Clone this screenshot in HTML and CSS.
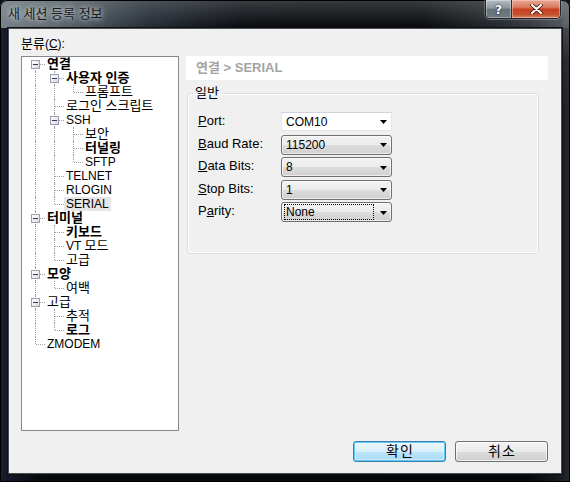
FILE: index.html
```html
<!DOCTYPE html>
<html lang="ko">
<head>
<meta charset="utf-8">
<title>새 세션 등록 정보</title>
<link rel="stylesheet" href="styles.css">
</head>
<body>
<div class="window">
  <div class="titlebar">
    <div class="title">새 세션 등록 정보</div>
    <div class="caption-buttons">
      <div class="cap-btn help">?</div>
      <div class="cap-btn close">
        <svg width="13" height="10" viewBox="0 0 13 10"><path d="M2 1 L11 9 M11 1 L2 9" stroke="#3a1208" stroke-width="3.6" stroke-linecap="round"/><path d="M2 1 L11 9 M11 1 L2 9" stroke="#fff" stroke-width="2.2" stroke-linecap="round"/></svg>
      </div>
    </div>
  </div>
  <div class="client">
    <div class="cat-label"><span class="ko">분류</span>(<u>C</u>):</div>
    <div class="main">
      <div class="tree">
        <div class="row"><span class="c first"><span class="box"></span></span><span class="lbl b ko">연결</span></div>
        <div class="row"><span class="g v"></span><span class="c mid"><span class="box"></span></span><span class="lbl b ko">사용자 인증</span></div>
        <div class="row"><span class="g v"></span><span class="g v"></span><span class="c end"></span><span class="lbl ko">프롬프트</span></div>
        <div class="row"><span class="g v"></span><span class="c mid"></span><span class="lbl ko">로그인 스크립트</span></div>
        <div class="row"><span class="g v"></span><span class="c mid"><span class="box"></span></span><span class="lbl">SSH</span></div>
        <div class="row"><span class="g v"></span><span class="g v"></span><span class="c mid"></span><span class="lbl ko">보안</span></div>
        <div class="row"><span class="g v"></span><span class="g v"></span><span class="c mid"></span><span class="lbl b ko">터널링</span></div>
        <div class="row"><span class="g v"></span><span class="g v"></span><span class="c end"></span><span class="lbl">SFTP</span></div>
        <div class="row"><span class="g v"></span><span class="c mid"></span><span class="lbl">TELNET</span></div>
        <div class="row"><span class="g v"></span><span class="c mid"></span><span class="lbl">RLOGIN</span></div>
        <div class="row"><span class="g v"></span><span class="c end"></span><span class="lbl sel">SERIAL</span></div>
        <div class="row"><span class="c mid"><span class="box"></span></span><span class="lbl b ko">터미널</span></div>
        <div class="row"><span class="g v"></span><span class="c mid"></span><span class="lbl b ko">키보드</span></div>
        <div class="row"><span class="g v"></span><span class="c mid"></span><span class="lbl">VT <span class="ko">모드</span></span></div>
        <div class="row"><span class="g v"></span><span class="c end"></span><span class="lbl ko">고급</span></div>
        <div class="row"><span class="c mid"><span class="box"></span></span><span class="lbl b ko">모양</span></div>
        <div class="row"><span class="g v"></span><span class="c end"></span><span class="lbl ko">여백</span></div>
        <div class="row"><span class="c mid"><span class="box"></span></span><span class="lbl ko">고급</span></div>
        <div class="row"><span class="g v"></span><span class="c mid"></span><span class="lbl ko">추적</span></div>
        <div class="row"><span class="g v"></span><span class="c end"></span><span class="lbl b ko">로그</span></div>
        <div class="row"><span class="c end"></span><span class="lbl">ZMODEM</span></div>
      </div>
      <div class="panel">
        <div class="header">연결 &gt; SERIAL</div>
        <fieldset class="group">
          <legend>일반</legend>
          <div class="form">
            <div class="flabel"><u>P</u>ort:</div>
            <div class="combo edit"><span class="val">COM10</span><svg class="arrow" width="7" height="4" viewBox="0 0 7 4"><path d="M0 0 H7 L3.5 4 Z" fill="#000"/></svg></div>
            <div class="flabel"><u>B</u>aud Rate:</div>
            <div class="combo"><span class="val">115200</span><svg class="arrow" width="7" height="4" viewBox="0 0 7 4"><path d="M0 0 H7 L3.5 4 Z" fill="#000"/></svg></div>
            <div class="flabel"><u>D</u>ata Bits:</div>
            <div class="combo"><span class="val">8</span><svg class="arrow" width="7" height="4" viewBox="0 0 7 4"><path d="M0 0 H7 L3.5 4 Z" fill="#000"/></svg></div>
            <div class="flabel"><u>S</u>top Bits:</div>
            <div class="combo"><span class="val">1</span><svg class="arrow" width="7" height="4" viewBox="0 0 7 4"><path d="M0 0 H7 L3.5 4 Z" fill="#000"/></svg></div>
            <div class="flabel">P<u>a</u>rity:</div>
            <div class="combo"><span class="val focus">None</span><svg class="arrow" width="7" height="4" viewBox="0 0 7 4"><path d="M0 0 H7 L3.5 4 Z" fill="#000"/></svg></div>
          </div>
        </fieldset>
      </div>
    </div>
    <div class="buttons">
      <div class="btn default">확인</div>
      <div class="btn">취소</div>
    </div>
  </div>
</div>
</body>
</html>
```

FILE: styles.css
```css
* { box-sizing: border-box; }
html, body { margin: 0; padding: 0; }
body {
  width: 570px;
  height: 482px;
  overflow: hidden;
  background: #0c0e12;
  font-family: "Liberation Sans", "Noto Sans CJK KR", sans-serif;
  font-size: 12px;
  color: #000;
}
.ko { font-size: 13px; }
.window {
  width: 570px;
  height: 482px;
  display: flex;
  flex-direction: column;
  border-radius: 7px 7px 0 0;
  background:
    linear-gradient(to bottom, rgba(150,160,166,0.35) 0px, rgba(0,0,0,0) 28px) top left / 570px 28px no-repeat,
    linear-gradient(to right, rgba(125,136,142,0.95) 0px, rgba(100,112,118,0.9) 60px, rgba(50,60,70,0.65) 150px, rgba(14,18,30,0.2) 240px, rgba(10,12,16,0) 300px, rgba(10,12,16,0) 420px, rgba(60,66,72,0.55) 500px, rgba(95,100,106,0.8) 570px) top left / 570px 28px no-repeat,
    linear-gradient(to bottom, rgba(120,126,132,0.7) 0px, rgba(60,64,70,0.3) 60px, rgba(0,0,0,0) 110px) right top / 8px 482px no-repeat,
    linear-gradient(to right, #1b1e2c 0px, #15182a 8px, #07080b 40px, #060709 530px, #1a1d21 562px, #26292d 570px);
  box-shadow: inset 0 0 0 1px #000;
}
.titlebar {
  height: 28px;
  flex: none;
  display: flex;
  align-items: flex-start;
  justify-content: space-between;
  padding-left: 8px;
  padding-right: 9px;
}
.title {
  margin-top: 6px;
  line-height: 16px;
  font-size: 13px;
  color: #1a1c1e;
  text-shadow: 0 0 5px rgba(230,235,240,0.9), 0 0 9px rgba(230,235,240,0.6);
}
.caption-buttons {
  display: flex;
  height: 19px;
  border: 1px solid #1e2226;
  border-top: none;
  border-radius: 0 0 5px 5px;
  overflow: hidden;
  box-shadow: 0 1px 0 rgba(255,255,255,0.25), -1px 0 0 rgba(255,255,255,0.2), 1px 0 0 rgba(255,255,255,0.2);
}
.cap-btn {
  height: 18px;
  display: flex;
  align-items: center;
  justify-content: center;
  color: #fff;
  font-weight: bold;
  font-family: "DejaVu Sans", sans-serif;
}
.cap-btn.help {
  width: 26px;
  font-size: 13px;
  background: linear-gradient(#b3bcc2 0%, #8c979e 45%, #66727a 52%, #6d7a82 100%);
  box-shadow: inset 0 0 0 1px rgba(255,255,255,0.35);
  text-shadow: 0 0 2px #222, 0 0 1px #000;
  border-right: 1px solid #2a2f33;
}
.cap-btn.close {
  width: 48px;
  background: linear-gradient(#e9a894 0%, #d97a5f 40%, #c8411f 52%, #c4502c 80%, #d8866a 100%);
  box-shadow: inset 0 0 0 1px rgba(255,220,210,0.45);
}
.client {
  flex: 1;
  margin: 0 8px 8px 8px;
  background: #f0f0f0;
  border: 1px solid #4a4f56;
  box-shadow: 0 0 0 1px #0e1013;
  display: flex;
  flex-direction: column;
  padding: 8px 13px 11px 12px;
}
.cat-label {
  height: 14px;
  line-height: 14px;
  margin-bottom: 5px;
  white-space: nowrap;
}
u { text-decoration: underline; text-underline-offset: 1px; }
.main {
  display: flex;
  gap: 7px;
  height: 375px;
  flex: none;
}
.tree {
  width: 158px;
  height: 375px;
  background: #fff;
  border: 1px solid #828790;
  padding-left: 4px;
}
.row {
  display: flex;
  height: 14px;
}
.g, .c {
  width: 19px;
  height: 14px;
  flex: none;
  position: relative;
}
.g.v::before, .c::before {
  content: "";
  position: absolute;
  left: 9px;
  top: 0;
  height: 14px;
  border-left: 1px dotted #a0a0a0;
}
.c.end::before { height: 7px; }
.c.first::before { top: 7px; height: 7px; }
.c::after {
  content: "";
  position: absolute;
  left: 10px;
  top: 7px;
  width: 9px;
  border-top: 1px dotted #a0a0a0;
}
.box {
  position: absolute;
  left: 5px;
  top: 3px;
  width: 9px;
  height: 9px;
  border: 1px solid #9c9cb4;
  background: linear-gradient(135deg, #ffffff 0%, #f0f0f0 50%, #d4d4dc 100%);
  z-index: 1;
}
.box::after {
  content: "";
  position: absolute;
  left: 1px;
  top: 3px;
  width: 5px;
  height: 1px;
  background: #2c3a5c;
}
.lbl {
  line-height: 14px;
  height: 14px;
  padding: 0 2px;
  white-space: nowrap;
}
.lbl.b { font-weight: bold; }
.lbl.sel { background: #e6e6e6; }
.panel {
  width: 362px;
  display: flex;
  flex-direction: column;
}
.header {
  height: 24px;
  background: #fff;
  padding-left: 10px;
  line-height: 23px;
  font-size: 13px;
  font-weight: bold;
  color: #a3a3a3;
}
.group {
  margin: 6px 9px 0 1px;
  padding: 12px 10px 31px 10px;
  border: 1px solid #d5dfe5;
  border-radius: 3px;
  box-shadow: inset 0 0 0 1px #fff;
  min-width: 0;
}
.group legend {
  padding: 0 3px 0 1px;
  margin-left: -4px;
  line-height: 14px;
  height: 14px;
  font-size: 13px;
}
.form {
  display: grid;
  grid-template-columns: 83px 111px;
  row-gap: 2.5px;
}
.flabel {
  height: 20px;
  line-height: 18px;
  font-size: 13px;
}
.combo {
  height: 20px;
  display: flex;
  align-items: center;
  justify-content: space-between;
  padding: 0 3px 0 2px;
  border: 1px solid #707070;
  border-radius: 3px;
  background: linear-gradient(#f2f2f2 0%, #ebebeb 50%, #dddddd 50%, #cfcfcf 100%);
  box-shadow: inset 0 0 0 1px rgba(255,255,255,0.6);
}
.combo.edit {
  height: 19px;
  border: 1px solid #e2e6ea;
  border-top-color: #cfd4d9;
  border-radius: 0;
  background: #fff;
  box-shadow: none;
}
.val {
  padding: 0 2px;
  line-height: 14px;
  height: 16px;
  display: flex;
  align-items: center;
  font-size: 12px;
}
.val.focus {
  width: 90px;
  outline: 1px dotted #000;
  outline-offset: -1px;
  padding-left: 2px;
}
.arrow { flex: none; margin-right: 1px; margin-top: 1px; }
.buttons {
  margin-top: 10px;
  height: 21px;
  display: flex;
  justify-content: flex-end;
  gap: 9px;
}
.btn {
  width: 93px;
  height: 21px;
  border: 1px solid #707070;
  border-radius: 3px;
  background: linear-gradient(#f2f2f2 0%, #ebebeb 50%, #dddddd 50%, #cfcfcf 100%);
  box-shadow: inset 0 0 0 1px rgba(255,255,255,0.7);
  display: flex;
  align-items: center;
  justify-content: center;
  font-size: 14px;
  line-height: 15px;
  letter-spacing: 1px;
  padding-left: 1px;
}
.btn.default {
  border-color: #3c7fb1;
  background: linear-gradient(#eaf6fd 0%, #d9f0fc 50%, #bee6fd 50%, #a7d9f5 100%);
  box-shadow: inset 0 0 0 1px #5fc9f5, inset 0 0 0 2px rgba(255,255,255,0.4);
}
```
